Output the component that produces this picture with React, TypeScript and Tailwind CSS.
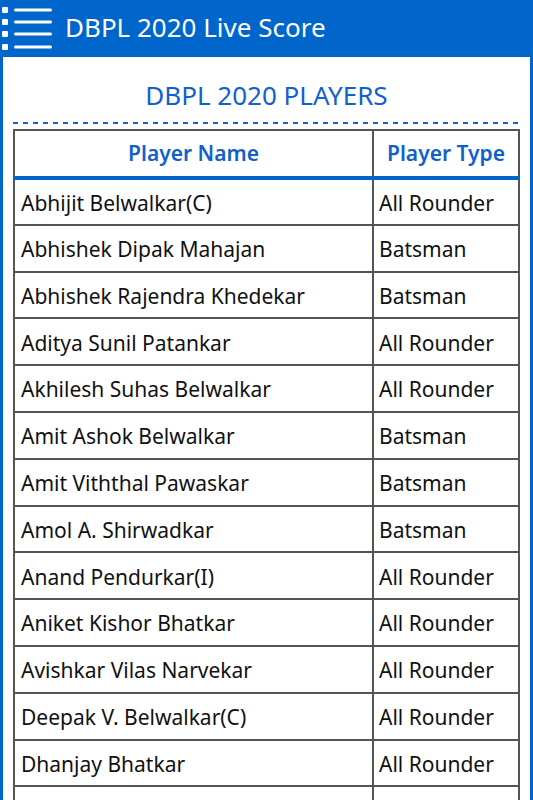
import React from 'react';

const players: [string, string][] = [
  ['Abhijit Belwalkar(C)', 'All Rounder'],
  ['Abhishek Dipak Mahajan', 'Batsman'],
  ['Abhishek Rajendra Khedekar', 'Batsman'],
  ['Aditya Sunil Patankar', 'All Rounder'],
  ['Akhilesh Suhas Belwalkar', 'All Rounder'],
  ['Amit Ashok Belwalkar', 'Batsman'],
  ['Amit Viththal Pawaskar', 'Batsman'],
  ['Amol A. Shirwadkar', 'Batsman'],
  ['Anand Pendurkar(I)', 'All Rounder'],
  ['Aniket Kishor Bhatkar', 'All Rounder'],
  ['Avishkar Vilas Narvekar', 'All Rounder'],
  ['Deepak V. Belwalkar(C)', 'All Rounder'],
  ['Dhanjay Bhatkar', 'All Rounder'],
];

function MenuIcon() {
  return (
    <svg width="54" height="52" viewBox="0 0 54 52" className="shrink-0">
      {[7, 19, 31, 44].map((y) => (
        <g key={y} fill="#fff">
          <rect x="2" y={y - 3} width="6" height="6" rx="1" />
          <rect x="14" y={y - 1.5} width="38" height="3" rx="1.5" />
        </g>
      ))}
    </svg>
  );
}

export default function App() {
  return (
    <div className="w-[533px] h-[800px] overflow-hidden bg-white font-['Noto_Sans',sans-serif]">
      {/* Top bar */}
      <div className="h-[57px] bg-[#0066cc] flex items-center">
        <MenuIcon />
        <span className="ml-[11px] mb-[4px] text-white text-[26px] leading-none">DBPL 2020 Live Score</span>
      </div>

      {/* Content frame */}
      <div className="border-x-[3px] border-[#0066cc] bg-white px-[10px] min-h-[743px]">
        <h1 className="pt-[22px] pb-[11px] text-center text-[#1161cc] text-[26px] leading-[32px]">
          DBPL 2020 PLAYERS
        </h1>
        <div className="h-[2px] bg-[repeating-linear-gradient(90deg,#1a5fd0_0_5px,transparent_5px_10px)]" />

        <table className="mt-[5px] w-full border-collapse border-2 border-[#555] text-[21px]">
          <thead>
            <tr className="h-[48px] border-b-[4px] border-[#0066cc]">
              <th className="w-[359px] border-r-2 border-[#555] text-[#1161cc] font-semibold text-center">
                Player Name
              </th>
              <th className="text-[#1161cc] font-semibold text-center">Player Type</th>
            </tr>
          </thead>
          <tbody>
            {players.map(([name, type]) => (
              <tr key={name} className="h-[46.8px] border-t-2 border-[#555] first:border-t-0">
                <td className="border-r-2 border-[#555] pl-[6px] pt-[3px] text-[#111]">{name}</td>
                <td className="pl-[5px] pt-[3px] text-[#111]">{type}</td>
              </tr>
            ))}
            <tr className="h-[46.8px] border-t-2 border-[#555]">
              <td className="border-r-2 border-[#555]" />
              <td />
            </tr>
          </tbody>
        </table>
      </div>
    </div>
  );
}
